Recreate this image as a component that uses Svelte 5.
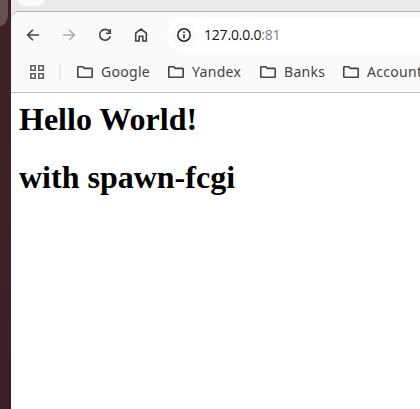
<script>
  const bookmarks = [
    { name: 'Google', width: 49, gap: 18 },
    { name: 'Yandex', width: 50, gap: 18 },
    { name: 'Banks', width: 40, gap: 19 },
    { name: 'Accounts', width: 62, gap: 18 }
  ];
</script>

<div class="screen">
  <div class="desktop"><div class="dock"></div></div>
  <div class="browser">
    <div class="tabs"><div class="tab"></div></div>
    <div class="chrome">
      <div class="toolbar">
        <div class="nav">
          <svg width="16" height="16" viewBox="0 0 16 16"><path d="M14 8H3M8 2.7 2.7 8 8 13.3" /></svg>
          <svg class="disabled" width="16" height="16" viewBox="0 0 16 16"><path d="M2 8h11M8 2.7 13.3 8 8 13.3" /></svg>
          <svg width="16" height="16" viewBox="0 0 16 16"><path d="M12.5 4.7A5.4 5.4 0 1 0 13.3 9.2M13.3 2v4.3H9" /></svg>
          <svg width="16" height="16" viewBox="0 0 16 16"><path d="M2.7 14V6.2L8 2l5.3 4.2V14H9.8V9.2H6.2V14Z" /></svg>
        </div>
        <div class="address">
          <div class="info">
            <svg width="16" height="16" viewBox="0 0 16 16"><circle cx="8" cy="8" r="6.2" /><path d="M8 7.2v4M8 4.5v1.6" /></svg>
          </div>
          <div class="url">127.0.0.0<span>:81</span></div>
        </div>
      </div>
      <div class="bookmarks">
        <svg class="apps" width="14" height="14" viewBox="0 0 14 14"><path d="M.8.8h4.4v4.4H.8zM8.8.8h4.4v4.4H8.8zM.8 8.8h4.4v4.4H.8zM8.8 8.8h4.4v4.4H8.8z" /></svg>
        <div class="divider"></div>
        {#each bookmarks as item}
          <div class="bookmark" style="margin-right: {item.gap}px">
            <svg width="16" height="12" viewBox="0 0 16 12"><path d="M.8 1.4Q.8.7 1.5.7h4.2l1.7 1.7h7.1q.7 0 .7.7v7.5q0 .7-.7.7h-13q-.7 0-.7-.7z" /></svg>
            <span style="width: {item.width}px">{item.name}</span>
          </div>
        {/each}
      </div>
    </div>
    <main>
      <h1>Hello World!</h1>
      <h1>with spawn-fcgi</h1>
    </main>
  </div>
</div>

<style>
  :global(body) { overflow: hidden; }
  .screen {
    display: flex;
    width: 420px;
    height: 409px;
    overflow: hidden;
    background: #fff;
  }
  .desktop {
    flex: 0 0 11px;
    background: linear-gradient(#3f2125, #3e2226 50%, #381f28);
  }
  .dock {
    width: 8px;
    height: 26px;
    background: #655052;
    border-bottom-right-radius: 9px 13px;
  }
  .browser {
    flex: 0 0 409px;
    overflow: hidden;
    background: linear-gradient(#eaeaea 20px, #fff 20px);
  }
  .tabs { height: 11px; background: #eaeaea; }
  .tab {
    width: 28px;
    height: 6px;
    margin-left: 6px;
    background: #fafafa;
    border-radius: 0 0 10px 10px / 0 0 6px 6px;
  }
  .chrome {
    box-sizing: border-box;
    height: 82px;
    background: #fafafa;
    border-top: 1px solid #b0b0b0;
    border-bottom: 1px solid #c0c0c0;
    border-top-left-radius: 8px;
  }
  .toolbar { display: flex; height: 46px; align-items: center; }
  .nav { display: flex; gap: 20px; width: 156px; box-sizing: border-box; padding-left: 14px; }
  svg { display: block; flex-shrink: 0; fill: none; stroke: #424242; stroke-width: 1.6; }
  .disabled { stroke: #ababab; }
  .address {
    display: flex;
    align-items: center;
    flex: 1;
    height: 34px;
    background: #fff;
    border-radius: 17px 0 0 17px;
  }
  .info {
    display: flex;
    align-items: center;
    justify-content: center;
    width: 26px;
    height: 26px;
    margin-left: 4px;
    border-radius: 50%;
    background: #fafafa;
  }
  .info svg { stroke: #202020; stroke-width: 1.5; }
  .url {
    margin-left: 7px;
    font: 14px/20px "Open Sans", "Noto Sans", sans-serif;
    letter-spacing: -.2px;
    color: #111;
    white-space: nowrap;
  }
  .url span { color: #808080; }
  .bookmarks { display: flex; align-items: center; height: 28px; padding-left: 19px; }
  .apps { stroke: #5c5f61; }
  .divider { flex: 0 0 2px; height: 15px; margin: 0 16px 0 15px; background: #e8e8e8; }
  .bookmark { display: flex; align-items: center; flex: none; gap: 8px; }
  .bookmark span {
    font: 14px/20px "Noto Sans", "Open Sans", sans-serif;
    letter-spacing: .3px;
    color: #424242;
    white-space: nowrap;
  }
  main { padding: 8px 8px 0; }
  h1 {
    margin: 0 0 21px;
    font: bold 32px/37px "Liberation Serif", "Times New Roman", serif;
    color: #000;
    white-space: nowrap;
  }
</style>
